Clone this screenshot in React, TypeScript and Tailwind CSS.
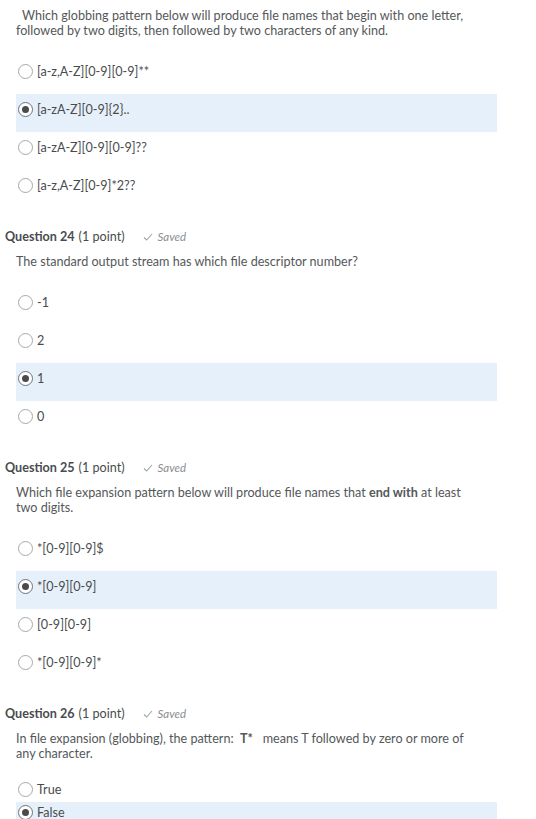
import React from 'react';

type Option = { label: string; selected?: boolean };

type Question = {
    number?: number;
    text: React.ReactNode;
    indentFirst?: boolean;
    options: Option[];
    compact?: boolean;
};

const questions: Question[] = [
    {
        text: 'Which globbing pattern below will produce file names that begin with one letter, followed by two digits, then followed by two characters of any kind.',
        indentFirst: true,
        options: [
            { label: '[a-z,A-Z][0-9][0-9]**' },
            { label: '[a-zA-Z][0-9]{2}..', selected: true },
            { label: '[a-zA-Z][0-9][0-9]??' },
            { label: '[a-z,A-Z][0-9]*2??' },
        ],
    },
    {
        number: 24,
        text: 'The standard output stream has which file descriptor number?',
        options: [{ label: '-1' }, { label: '2' }, { label: '1', selected: true }, { label: '0' }],
    },
    {
        number: 25,
        text: (
            <>
                Which file expansion pattern below will produce file names that <b className="font-bold">end with</b> at least two digits.
            </>
        ),
        options: [
            { label: '*[0-9][0-9]$' },
            { label: '*[0-9][0-9]', selected: true },
            { label: '[0-9][0-9]' },
            { label: '*[0-9][0-9]*' },
        ],
    },
    {
        number: 26,
        text: (
            <>
                In file expansion (globbing), the pattern:&nbsp; <b className="font-bold">T*</b>&nbsp;&nbsp; means T followed by zero or more of any character.
            </>
        ),
        compact: true,
        options: [{ label: 'True' }, { label: 'False', selected: true }],
    },
];

function Radio({ selected }: { selected?: boolean }) {
    return (
        <span
            className={
                'flex h-[15px] w-[15px] shrink-0 items-center justify-center rounded-full border bg-white ' +
                (selected ? 'border-[#6e7376]' : 'border-[#a5a8aa]')
            }
        >
            {selected && <span className="h-[7px] w-[7px] rounded-full bg-[#494c4e]" />}
        </span>
    );
}

function Check() {
    return (
        <svg width="10" height="8" viewBox="0 0 10 8" fill="none" className="mr-[5px]">
            <path d="M1 4.5 L3.6 7 L9 1" stroke="#a0a4a6" strokeWidth="1.1" />
        </svg>
    );
}

export default function App() {
    return (
        <div
            className="h-[819px] w-[536px] overflow-hidden bg-white text-[12.6px] text-[#494c4e]"
            style={{ fontFamily: 'Lato, "Noto Sans", sans-serif' }}
        >
            {questions.map((q, qi) => (
                <section key={qi} className={qi === 0 ? 'pt-[8px]' : 'mt-[19px]'}>
                    {q.number && (
                        <div className="flex h-[20px] items-center pl-[5px] leading-[20px]">
                            <span className="font-bold">Question {q.number}</span>
                            <span className="ml-[4px]">(1 point)</span>
                            <span className="ml-[18px] flex items-center text-[11.5px] italic text-[#8a8e91]">
                                <Check />
                                Saved
                            </span>
                        </div>
                    )}
                    <div className={'pl-[16px] ' + (q.number ? 'mt-[7px]' : '')}>
                        <p className={'w-[455px] leading-[15px] text-[#54585a] ' + (q.indentFirst ? 'indent-[6px]' : '')}>
                            {q.text}
                        </p>
                        <div className="mt-[18px] w-[481px]">
                            {q.options.map((o, oi) => (
                                <label
                                    key={oi}
                                    className={
                                        'flex items-start pl-[2px] ' +
                                        (q.compact ? 'h-[23px] pt-[3px] ' : 'h-[38px] pt-[8px] ') +
                                        (o.selected ? 'bg-[#e6f0fa]' : '')
                                    }
                                >
                                    <span className="flex h-[15px] items-center gap-[4px] leading-[15px]">
                                        <Radio selected={o.selected} />
                                        <span>{o.label}</span>
                                    </span>
                                </label>
                            ))}
                        </div>
                    </div>
                </section>
            ))}
        </div>
    );
}
